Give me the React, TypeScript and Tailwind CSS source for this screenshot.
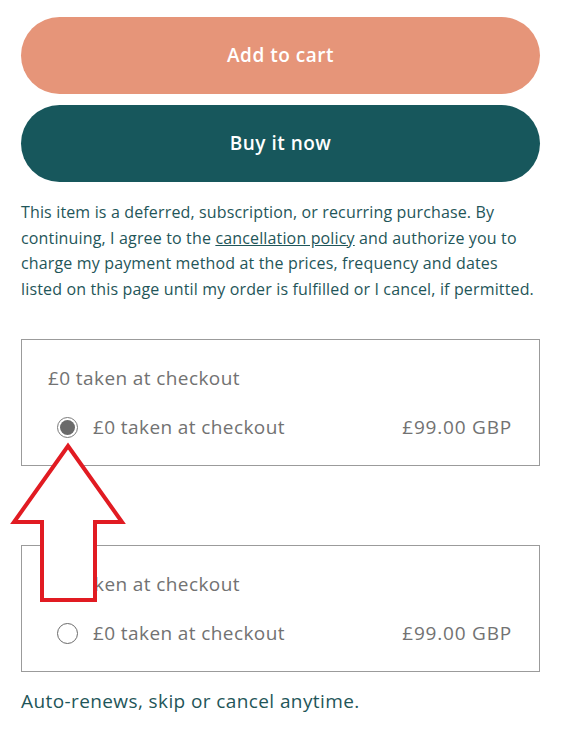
const PlanBox = ({ checked }: { checked: boolean }) => {
  return (
    <div className="border border-[#9b9b9b] px-[26px] pt-[26px] pb-[26px] text-[19px] leading-[24px] tracking-[0.4px] text-[#727272]">
      <div>£0 taken at checkout</div>
      <label className="mt-[25px] flex items-center justify-between">
        <span className="flex items-center">
          {checked ? (
            <span className="ml-[9px] flex h-[21px] w-[21px] items-center justify-center rounded-full border border-[#7a7a7a]">
              <span className="h-[15px] w-[15px] rounded-full bg-[#6a6a6a]" />
            </span>
          ) : (
            <span className="ml-[9px] h-[21px] w-[21px] rounded-full border border-[#6a6a6a]" />
          )}
          <span className="ml-[15px]">£0 taken at checkout</span>
        </span>
        <span className="mr-[1px] tracking-[0.8px]">£99.00 GBP</span>
      </label>
    </div>
  );
};

const App = () => {
  return (
    <div className="relative min-h-[737px] w-[561px] bg-white font-['Open_Sans',sans-serif]">
      <div className="px-[21px] pt-[17px]">
        <button className="flex h-[77px] w-full items-center justify-center rounded-full bg-[#e69579] text-[19px] font-semibold tracking-[0.5px] text-white">
          Add to cart
        </button>
        <button className="mt-[11px] flex h-[77px] w-full items-center justify-center rounded-full bg-[#17575c] text-[19px] font-semibold tracking-[0.5px] text-white">
          Buy it now
        </button>

        <p className="mt-[18px] whitespace-nowrap text-[16px] leading-[25.5px] tracking-[0.15px] text-[#1f5659]">
          This item is a deferred, subscription, or recurring purchase. By
          <br />
          continuing, I agree to the{" "}
          <a href="#" className="underline">
            cancellation policy
          </a>{" "}
          and authorize you to
          <br />
          charge my payment method at the prices, frequency and dates
          <br />
          listed on this page until my order is fulfilled or I cancel, if
          permitted.
        </p>

        <div className="mt-[37px]">
          <PlanBox checked />
        </div>
        <div className="mt-[79px]">
          <PlanBox checked={false} />
        </div>

        <p className="mt-[15px] text-[19px] leading-[28px] tracking-[0.4px] text-[#1f5659]">
          Auto-renews, skip or cancel anytime.
        </p>
      </div>

      {/* annotation arrow over the page */}
      <svg
        className="pointer-events-none absolute left-0 top-0"
        width="561"
        height="737"
        viewBox="0 0 561 737"
      >
        <polygon
          points="68,446 122,522 95,522 95,600 42,600 42,522 14,522"
          fill="white"
          stroke="#e11b22"
          strokeWidth="4"
          strokeLinejoin="miter"
        />
      </svg>
    </div>
  );
};

export default App;
